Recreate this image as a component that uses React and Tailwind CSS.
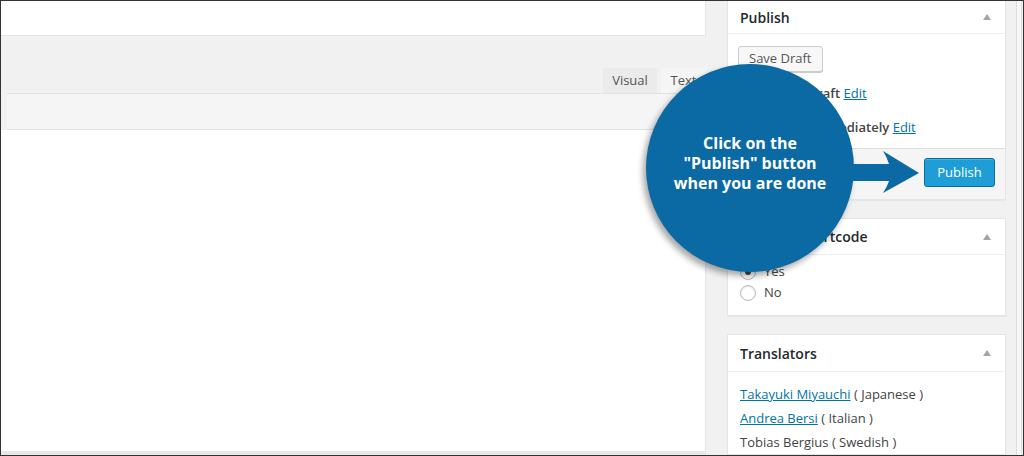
import React from "react";

function Toggle() {
  return (
    <svg width="8" height="6" viewBox="0 0 8 6" className="shrink-0">
      <path d="M0 6 L4 0 L8 6 Z" fill="#a0a5aa" />
    </svg>
  );
}

function BoxHeader({ title, height }) {
  return (
    <div className={`flex items-center justify-between pl-[12px] pr-[14px] border-b border-[#eeeeee] ${height}`}>
      <span className="text-[14px] font-semibold text-[#23282d]">{title}</span>
      <Toggle />
    </div>
  );
}

function Radio({ checked, label }) {
  return (
    <label className="flex items-center h-[21px] gap-[8px] text-[13px] text-[#444]">
      <span className="w-[16px] h-[16px] rounded-full border border-[#b4b9be] bg-white shadow-[inset_0_1px_2px_rgba(0,0,0,0.1)] flex items-center justify-center">
        {checked && <span className="w-[6px] h-[6px] rounded-full bg-[#444]" />}
      </span>
      {label}
    </label>
  );
}

export default function App() {
  return (
    <div
      className="w-[1024px] h-[456px] relative overflow-hidden border border-[#333] bg-[#f1f1f1] flex text-[13px] text-[#444]"
      style={{ fontFamily: '"Open Sans", "Liberation Sans", Arial, sans-serif' }}
    >
      {/* editor column */}
      <div className="w-[705px] shrink-0 flex flex-col">
        <div className="h-[35px] bg-white border-b border-r border-[#e5e5e5]" />
        <div className="h-[32px]" />
        <div className="h-[25px] flex justify-end gap-[4px]">
          <div className="w-[54px] bg-[#ebebeb] text-[#555] flex items-center justify-center">Visual</div>
          <div className="w-[45px] bg-[#f5f5f5] text-[#555] flex items-center justify-center">Text</div>
        </div>
        <div className="h-[37px] bg-[#f5f5f5] border-t border-b border-[#e2e2e2] ml-[6px]" />
        <div className="flex-1 bg-white border-r border-[#e5e5e5]" />
        <div className="h-[4px] bg-[#e8e8e8]" />
      </div>

      {/* sidebar */}
      <div className="ml-[21px] w-[279px] shrink-0 flex flex-col gap-[18px]">
        {/* Publish box */}
        <div className="bg-white border border-t-0 border-[#e5e5e5] shadow-[0_1px_1px_rgba(0,0,0,0.04)]">
          <BoxHeader title="Publish" height="h-[33px]" />
          <div className="pt-[12px] px-[10px]">
            <button className="h-[26px] px-[10px] rounded-[3px] border border-[#cccccc] bg-[#f7f7f7] text-[#555] text-[13px] shadow-[0_1px_0_#ccc]">
              Save Draft
            </button>
          </div>
          <div className="mt-[12px] h-[20px] pl-[35px] flex items-center">
            Status:&nbsp;<b className="font-semibold text-[#444]">Draft</b>&nbsp;
            <a className="text-[#0073aa] underline">Edit</a>
          </div>
          <div className="mt-[14px] h-[20px] pl-[35px] flex items-center">
            Publish&nbsp;<b className="font-semibold text-[#444]">immediately</b>&nbsp;
            <a className="text-[#0073aa] underline">Edit</a>
          </div>
          <div className="mt-[10px] bg-[#f5f5f5] border-t border-[#dddddd] pt-[9px] pb-[12px] px-[10px] flex justify-end">
            <button className="h-[29px] w-[71px] rounded-[3px] border border-[#0a6c9e] bg-[#1e9dd6] text-white text-[13px] shadow-[inset_0_1px_0_rgba(120,200,230,0.5)]">
              Publish
            </button>
          </div>
        </div>

        {/* shortcode box */}
        <div className="bg-white border border-[#e5e5e5] shadow-[0_1px_1px_rgba(0,0,0,0.04)]">
          <BoxHeader title="Activate Shortcode" height="h-[36px]" />
          <div className="pt-[6px] pb-[12px] px-[12px]">
            <Radio checked label="Yes" />
            <Radio label="No" />
          </div>
        </div>

        {/* translators box */}
        <div className="bg-white border border-[#e5e5e5] flex-1 shadow-[0_1px_1px_rgba(0,0,0,0.04)]">
          <BoxHeader title="Translators" height="h-[37px]" />
          <div className="pt-[10px] px-[12px] leading-[24px]">
            <div>
              <a className="text-[#0073aa] underline">Takayuki Miyauchi</a> ( Japanese )
            </div>
            <div>
              <a className="text-[#0073aa] underline">Andrea Bersi</a> ( Italian )
            </div>
            <div>Tobias Bergius ( Swedish )</div>
          </div>
        </div>
      </div>

      <div className="ml-[10px] w-[6px] border-l border-r border-[#dddddd] bg-[#f7f7f7]" />

      {/* callout */}
      <div className="absolute left-[645px] top-[63px] w-[208px] h-[208px] rounded-full bg-[#0b69a3] shadow-[-3px_4px_6px_rgba(0,0,0,0.35)] flex flex-col items-center justify-center pb-[11px] text-white text-[16px] leading-[20px] font-bold text-center">
        <span>Click on the</span>
        <span>"Publish" button</span>
        <span>when you are done</span>
      </div>
      <svg className="absolute left-[839px] top-[144px]" width="85" height="52" viewBox="0 0 85 52">
        <path
          d="M0 19 L49 19 Q47 12 43 6 L79 28 L43 48 Q47 42 49 36 L0 36 Z"
          fill="#0b69a3"
        />
      </svg>
    </div>
  );
}
